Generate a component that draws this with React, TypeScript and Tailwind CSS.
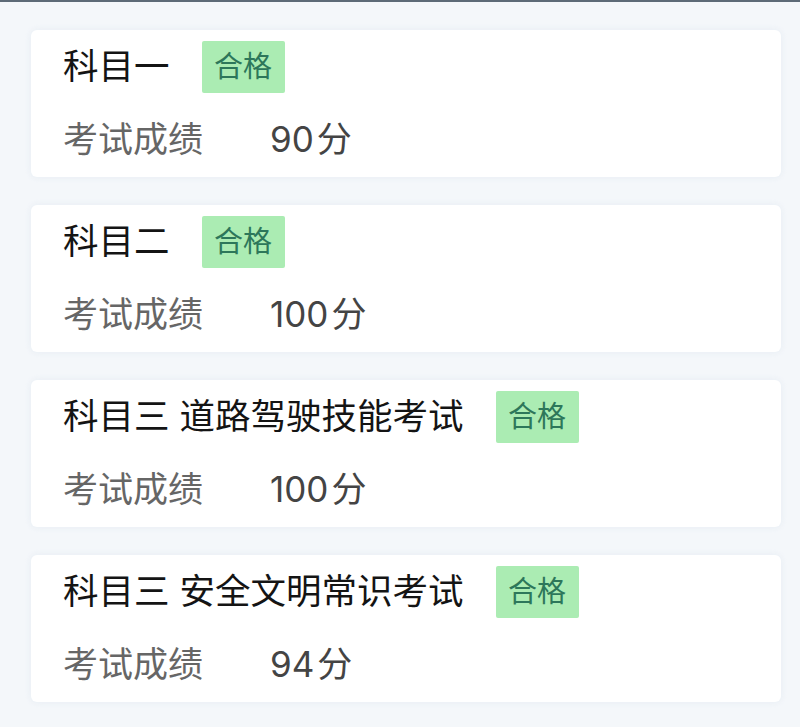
const exams = [
  { name: '科目一', score: '90' },
  { name: '科目二', score: '100' },
  { name: '科目三 道路驾驶技能考试', score: '100' },
  { name: '科目三 安全文明常识考试', score: '94' },
]

function ExamCard({ name, score }: { name: string; score: string }) {
  return (
    <div className="rounded-md bg-white pl-[32px] pr-6 pt-[11px] pb-[20px] shadow-[0_0_6px_rgba(220,228,238,0.6)]">
      <div className="flex h-[52px] items-center">
        <span className="text-[35.5px] leading-[40px] text-[#141414]">{name}</span>
        <span className="ml-[32px] flex h-[52px] w-[83px] items-center justify-center rounded-[2px] bg-[#abecb3] text-[29px] text-[#2d775a]">
          合格
        </span>
      </div>
      <div className="mt-[29px] flex items-center text-[35px] leading-[35px]">
        <span className="w-[207px] text-[#666666]">考试成绩</span>
        <span className="text-[#444444]">
          {score}
          <span className="ml-[3px]">分</span>
        </span>
      </div>
    </div>
  )
}

export default function App() {
  return (
    <div
      className="min-h-[727px] border-t-2 border-[#5d6a77] bg-[#f4f7fa]"
      style={{ fontFamily: "Inter, 'Noto Sans CJK SC', sans-serif" }}
    >
      <div className="flex flex-col gap-[28px] pl-[31px] pr-[19px] pt-[28px]">
        {exams.map((exam) => (
          <ExamCard key={exam.name} name={exam.name} score={exam.score} />
        ))}
      </div>
    </div>
  )
}
